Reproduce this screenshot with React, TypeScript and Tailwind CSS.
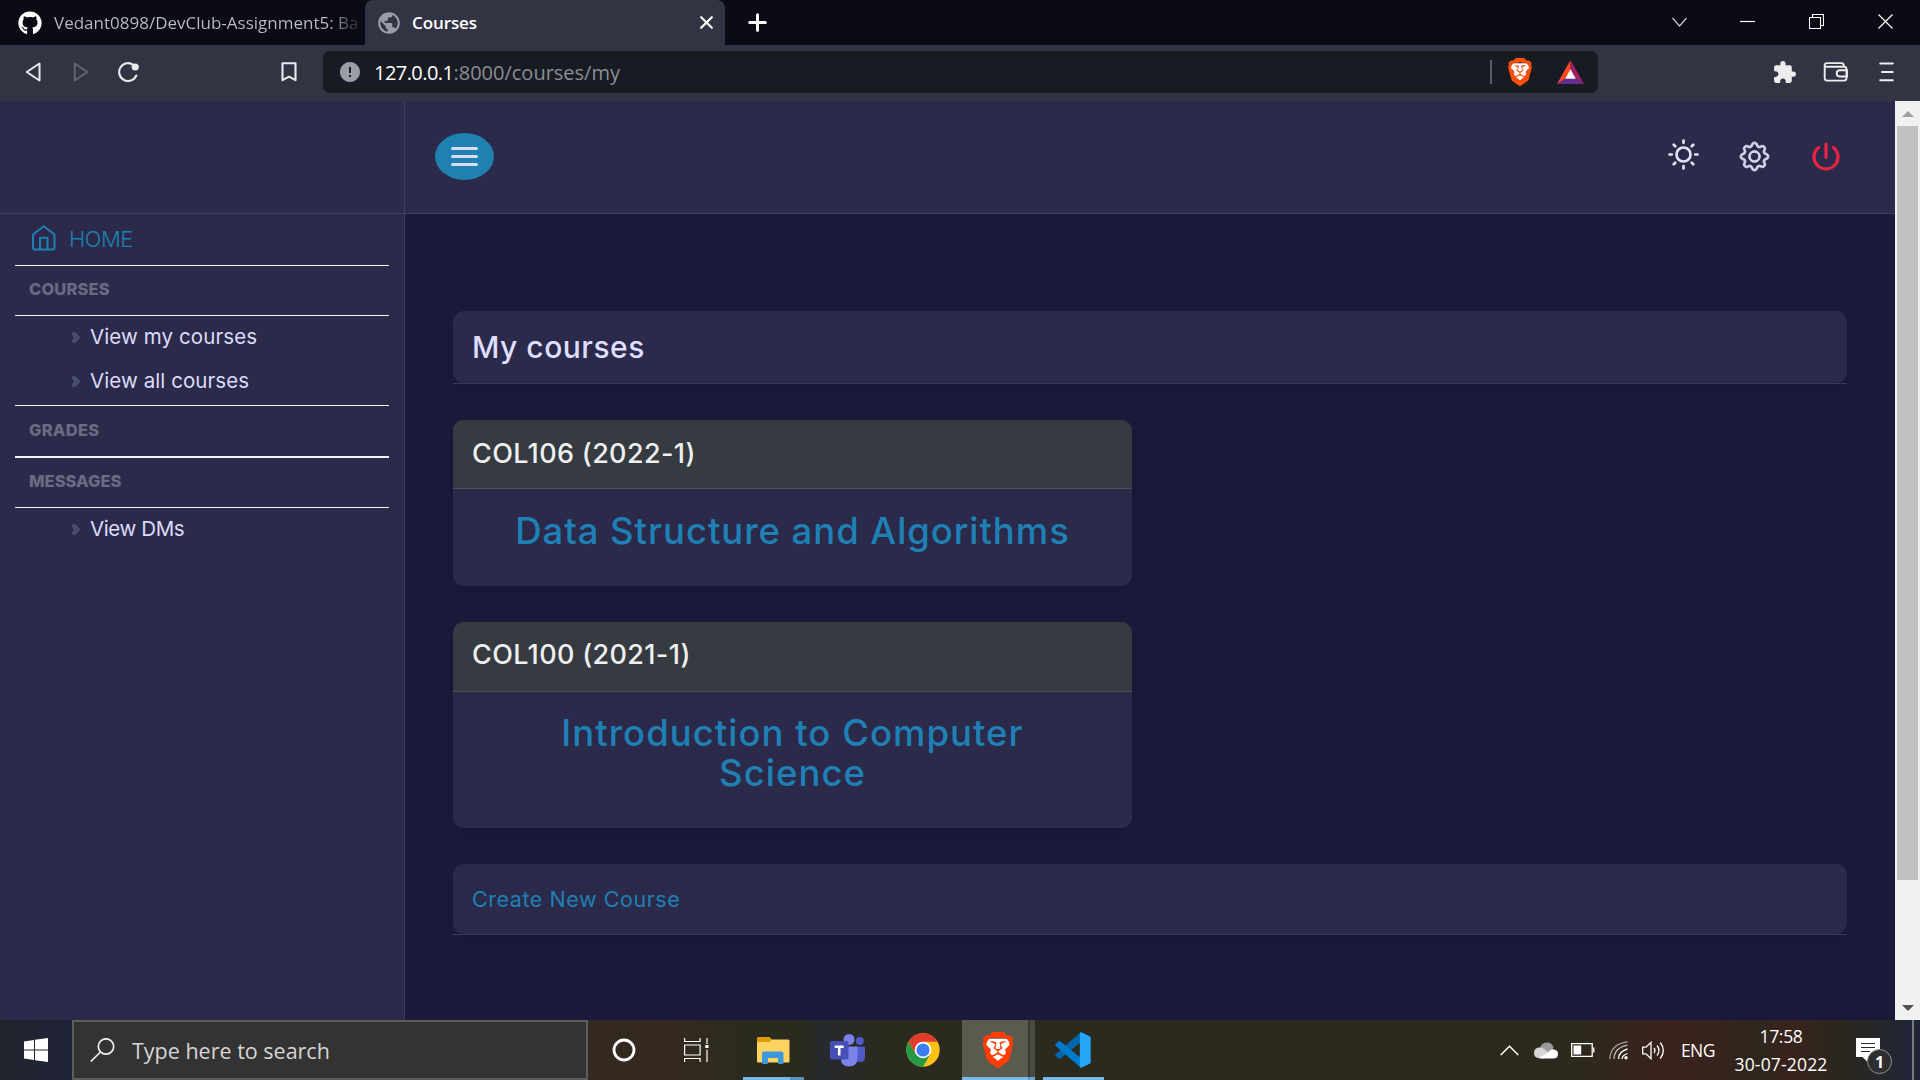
import React from "react";
import { BsGear } from "react-icons/bs";
import { SiBrave } from "react-icons/si";
import { FaGithub } from "react-icons/fa";
import { MdPublic, MdExtension, MdError } from "react-icons/md";

const ui = "font-['Open_Sans','Noto_Sans',sans-serif]";

function TabStrip() {
  return (
    <div className="flex h-[45px] items-stretch bg-[#0a0b14] text-white">
      <div className="flex w-[365px] items-center overflow-hidden pl-[18px]">
        <FaGithub className="size-6 shrink-0" />
        <div className="ml-3 w-[305px] overflow-hidden whitespace-nowrap bg-linear-to-r from-[#bcbec4] from-90% to-[#24252d] bg-clip-text text-[17px] text-transparent">
          Vedant0898/DevClub-Assignment5: Ba
        </div>
      </div>
      <div className="flex w-[360px] items-center rounded-t-lg bg-[#323443] pl-[11px] pr-[12px]">
        <MdPublic className="size-[26px] text-[#9a9da6]" />
        <div className="ml-[10px] text-[17px] font-semibold tracking-[-0.1px]">Courses</div>
        <svg className="ml-auto size-[13px]" viewBox="0 0 13 13" stroke="currentColor" strokeWidth="2.2" strokeLinecap="round">
          <path d="M1.2 1.2l10.6 10.6M11.8 1.2L1.2 11.8" />
        </svg>
      </div>
      <svg className="ml-[23px] mt-[13px] size-[19px]" viewBox="0 0 19 19" stroke="currentColor" strokeWidth="3" strokeLinecap="round">
        <path d="M9.5 1.7v15.6M1.7 9.5h15.6" />
      </svg>
      <div className="ml-auto flex w-[248px] items-center pb-[2px]">
        <svg width="15" height="10" viewBox="0 0 15 10" fill="none" stroke="#c9c9cd" strokeWidth="1.2"><path d="M.5 1l7 8 7-8" /></svg>
        <svg className="ml-[53px]" width="15" height="15" fill="none" stroke="#fff" strokeWidth="1.2"><path d="M0 7.5h15" /></svg>
        <svg className="ml-[54px]" width="15" height="15" fill="none" stroke="#fff" strokeWidth="1.1"><path d="M.5 3.5h11v11H.5zM3.5 3.5v-3h11v11h-3" /></svg>
        <svg className="ml-[54px]" width="15" height="15" fill="none" stroke="#fff" strokeWidth="1.2"><path d="M.5.5l14 14M14.5.5l-14 14" /></svg>
      </div>
    </div>
  );
}

function Toolbar() {
  return (
    <div className="flex h-14 items-start bg-[#323443] pt-[6px]">
      <div className="flex h-[42px] w-[323px] items-center">
        <svg className="ml-[25px]" width="16" height="20" viewBox="0 0 16 20" fill="none" stroke="#eaeaec" strokeWidth="2" strokeLinejoin="round"><path d="M14.5 1.5v17L1.7 10z" /></svg>
        <svg className="ml-[32px]" width="16" height="20" viewBox="0 0 16 20" fill="none" stroke="#62646f" strokeWidth="2" strokeLinejoin="round"><path d="M1.7 1.5v17L14.5 10z" /></svg>
        <svg className="ml-[29px]" width="22" height="20" viewBox="0 0 22 20" fill="none" stroke="#eaeaec" strokeWidth="2.1" strokeLinecap="round">
          <path d="M15.5 3A8.900 8.900 0 1 0 18.300 13.500" />
          <circle cx="17.200" cy="5" r="3.600" fill="#eaeaec" stroke="none" />
        </svg>
        <svg className="ml-[141px]" width="16" height="20" viewBox="0 0 16 20" fill="none" stroke="#eaeaec" strokeWidth="2.1" strokeLinejoin="round"><path d="M1.5 1.200h13v17L8 14.600 1.500 18.200z" /></svg>
      </div>
      <div className="flex h-[42px] w-[1275px] items-center rounded-[7px] bg-[#181b22] pl-[15px] pr-[14px]">
        <MdError className="size-6 text-[#9b9ea7]" />
        <div className="ml-3 mt-[2px] flex text-[20px]">
          <span className="tracking-[-0.55px] text-white">127.0.0.1</span>
          <span className="text-[#8b8e95]">:8000/courses/my</span>
        </div>
        <div className="ml-auto h-6 w-[2px] bg-[#5b5d63]" />
        <div className="ml-[14px] grid h-[29px] w-[26px] place-items-center">
          <BraveLogo className="size-[28px]" small />
        </div>
        <svg className="ml-[25px]" width="27" height="24" viewBox="0 0 27 24">
          <path d="M13.500 0L0 24l8.500-5.200 5-9z" fill="#ff4724" />
          <path d="M13.500 0L27 24l-8.500-5.200-5-9z" fill="#9e1f63" />
          <path d="M0 24h27l-8.500-5.500h-10z" fill="#662d91" />
          <path d="M13.500 9.300l5.300 9.500H8.200z" fill="#fff" />
        </svg>
      </div>
      <div className="flex h-[42px] flex-1 items-center text-[#ededee]">
        <MdExtension className="ml-[174px] size-[25px]" />
        <svg className="ml-[26px]" width="25" height="20" viewBox="0 0 25 20" fill="none" stroke="currentColor" strokeWidth="1.900" strokeLinejoin="round">
          <path d="M1.700 3.200v12.800q0 2.600 2.600 2.600h16.600q2.600 0 2.600-2.600V7q0-2.200-2.600-2.300H3.500q-1.800 0-1.800-1.700 0-1.900 2-1.900h15q2 0 2.300 3.300" />
          <path d="M24 8.300h-7q-3.300 0-3.300 3.100t3.300 3.100h7z" />
        </svg>
        <svg className="ml-[31px]" width="15" height="20" viewBox="0 0 15 20" stroke="currentColor" strokeWidth="2" strokeLinecap="round"><path d="M1.200 1.500h12.600M3 10h10.800M1.200 18.200h12.600" /></svg>
      </div>
    </div>
  );
}

function BraveLogo({ className, small }: { className: string; small?: boolean }) {
  return (
    <svg className={className} viewBox="0 0 24 24">
      <path d="M5 4.500h14l1 5-4 9-4 3.500-4-3.500-4-9z" fill="#fff" />
      <SiBrave size={24} color={small ? "#fb4f0b" : "#ff3d05"} />
    </svg>
  );
}

function NavHeading({ label, className }: { label: string; className: string }) {
  return (
    <div className={`flex items-center border-[#f4f4f8] pl-[14px] pb-[2px] text-[16.500px] font-extrabold text-[#6a6a82] ${className}`}>{label}</div>
  );
}

function NavLink({ label, className }: { label: string; className: string }) {
  return (
    <div className={`flex items-center pl-[57px] pb-[2px] text-[20.500px] text-[#dddcfa] ${className}`}>
      <svg width="8" height="11" viewBox="0 0 8 11" fill="#3f4468" stroke="#55587a" strokeWidth="1.200" strokeLinejoin="round">
        <path d="M.8 1h2.400L7.200 5.500 3.200 10H.8l.2-1.800 2.200-2.700L1 2.800z" />
      </svg>
      <span className="ml-[10px]">{label}</span>
    </div>
  );
}

function Sidebar() {
  return (
    <div className="w-[405px] shrink-0 border-r border-[#403e5f] bg-[#2b2a4a]">
      <div className="h-[113px] border-b border-[#403e5f]" />
      <div className="ml-[15px] w-[374px]">
        <div className="flex h-[52px] items-center border-b border-[#f4f4f8] pl-[17px] text-[22px] text-[#1f80b5]">
          <svg className="mb-[3px]" width="24" height="26" viewBox="0 0 24 26" fill="none" stroke="currentColor" strokeWidth="2" strokeLinejoin="round">
            <path d="M1 9.500L11.700 1.200 22.500 9.500v13q0 2-2 2H3q-2 0-2-2z" />
            <path d="M8 24.500V12.800h7.500v11.700" />
          </svg>
          <span className="ml-[13px] font-light tracking-[-0.5px]">HOME</span>
        </div>
        <NavHeading label="COURSES" className="h-[50px] border-b tracking-[0.15px]" />
        <NavLink label="View my courses" className="h-11 tracking-[0.1px]" />
        <NavLink label="View all courses" className="h-[45px] tracking-[0.08px]" />
        <NavHeading label="GRADES" className="h-[53px] border-t border-b-2 tracking-[0.25px]" />
        <NavHeading label="MESSAGES" className="h-[50px] border-b tracking-[0px]" />
        <NavLink label="View DMs" className="h-11 tracking-[-0.4px]" />
      </div>
    </div>
  );
}

function Header() {
  return (
    <div className="flex h-[113px] items-center border-b border-[#403e5f] bg-[#2b2a4a] pb-[2px] pl-[30px] pr-[54px]">
      <div className="flex h-[47px] w-[59px] flex-col items-center justify-center gap-[5px] rounded-[50%] bg-[#1f80b2]">
        <div className="h-[3px] w-[27px] rounded-full bg-[#dcdcf5]" />
        <div className="h-[3px] w-[27px] rounded-full bg-[#dcdcf5]" />
        <div className="h-[3px] w-[27px] rounded-full bg-[#dcdcf5]" />
      </div>
      <svg className="mb-[4px] ml-auto" width="31" height="31" viewBox="-15.5 -15.5 31 31" fill="none" stroke="#e2e2f8" strokeWidth="2.700" strokeLinecap="round">
        <circle r="7" />
        <path d="M0-14v2.300M0 14v-2.300M-14 0h2.300M14 0h-2.300M-9.800-9.800l1.600 1.600M9.800 9.800l-1.600-1.600M-9.800 9.800l1.600-1.600M9.800-9.800l-1.600 1.600" />
      </svg>
      <BsGear className="ml-[41px] size-[29px] overflow-visible text-[#d6d6ee]" strokeWidth="0.500" stroke="#d6d6ee" />
      <svg className="ml-[43px] mr-px" width="28" height="29" viewBox="0 0 28 29" fill="none" stroke="#ea2340" strokeWidth="3.200" strokeLinecap="round">
        <path d="M14 2v13.500M6.600 5.400a12 12 0 1 0 14.800 0" />
      </svg>
    </div>
  );
}

function CourseCard({ code, title, headClass, bodyClass }: { code: string; title: string; headClass: string; bodyClass: string }) {
  return (
    <div className="mt-9 w-[679px] overflow-hidden rounded-[11px] bg-[#2b2a4a] shadow-[0_6px_20px_rgba(10,8,48,0.15)]">
      <div className={`flex items-center border-b border-[#4e5154] bg-[#363a41] pl-[19px] text-[27px] font-medium tracking-[0.35px] text-[#efefef] ${headClass}`}>{code}</div>
      <div className={`px-[60px] text-center text-[36.500px] font-medium leading-10 text-[#1f80b5] ${bodyClass}`}>{title}</div>
    </div>
  );
}

function Main() {
  return (
    <div className="flex-1 bg-[#1b1a3b]">
      <Header />
      <div className="px-12 pt-[97px]">
        <div className="border-b border-[#403e5f]">
          <div className="flex h-[72px] items-center rounded-[11px] bg-[#2b2a4a] pl-[19px] text-[30px] font-medium tracking-[0.500px] text-[#dfdeff] shadow-[0_6px_20px_rgba(10,8,48,0.15)]">My courses</div>
        </div>
        <CourseCard code="COL106 (2022-1)" title="Data Structure and Algorithms" headClass="h-[69px]" bodyClass="h-[97px] pt-[22px] tracking-[0.940px] whitespace-nowrap" />
        <CourseCard code="COL100 (2021-1)" title="Introduction to Computer Science" headClass="h-[70px] pb-[2px]" bodyClass="h-[136px] pt-[21px] tracking-[1.020px]" />
        <div className="mt-9 border-b border-[#403e5f]">
          <div className="flex h-[70px] items-center rounded-[11px] bg-[#2b2a4a] pl-[19px] text-[21.500px] tracking-[0.550px] text-[#1f80b5] shadow-[0_6px_20px_rgba(10,8,48,0.15)]">Create New Course</div>
        </div>
      </div>
    </div>
  );
}

function Scrollbar() {
  return (
    <div className="flex w-[25px] shrink-0 flex-col items-center bg-[#f1f1f1]">
      <svg className="mt-[10px]" width="12" height="6" viewBox="0 0 12 6" fill="#a0a0a0"><path d="M6 0l6 6H0z" /></svg>
      <div className="mt-[9px] h-[754px] w-[21px] bg-[#c1c1c1]" />
      <svg className="mb-[9px] mt-auto" width="12" height="6" viewBox="0 0 12 6" fill="#505050"><path d="M6 6L0 0h12z" /></svg>
    </div>
  );
}

function Explorer() {
  return (
    <svg width="33" height="27" viewBox="0 0 33 27">
      <path d="M0 1q0-1 1-1h11.500l2.500 2.500L12.500 6H0z" fill="#dd9b05" />
      <path d="M0 5h12l3-2.500h16q1.500 0 1.500 1.500v20.500q0 1-1 1H1q-1 0-1-1z" fill="#fdd462" />
      <path d="M5 26V16.500q0-2 2-2h17.500q2 0 2 2V26q0 1-1 1H22q-1 0-1-1v-5H11v5q0 1-1 1H6q-1 0-1-1z" fill="#3d97dc" />
    </svg>
  );
}

function Teams() {
  return (
    <svg width="36" height="33" viewBox="0 0 36 33">
      <circle cx="29.800" cy="7" r="4" fill="#5059c9" />
      <path d="M25 12.500h9q1 0 1 1V23q0 5-5 5t-5-4z" fill="#5059c9" />
      <circle cx="19" cy="5.500" r="5.500" fill="#7b83eb" />
      <path d="M11 12.500h15.500q1 0 1 1V24q0 8.500-8.500 8.500T11 24z" fill="#7b83eb" />
      <rect y="7" width="18.500" height="18.500" rx="1.800" fill="#464eb8" />
      <path d="M4.700 11.500h9V14h-3.200v7.500H7.900V14H4.700z" fill="#fff" />
    </svg>
  );
}

function Chrome() {
  return (
    <svg width="34" height="34" viewBox="-17 -17 34 34">
      <circle r="16.700" fill="#fbc116" />
      <path d="M-14.500-8.300A16.700 16.700 0 0 1 14.500-8.300H0L-7.200 4.200z" fill="#e33b2e" />
      <path d="M-14.500-8.300A16.700 16.700 0 0 0 0 16.700L7.200 4.200-7.200 4.200z" fill="#269847" />
      <circle r="8.300" fill="#fff" />
      <circle r="6.600" fill="#3c7df0" />
    </svg>
  );
}

function VsCode() {
  return (
    <svg width="36" height="36" viewBox="0 0 36 36">
      <path d="M26 0l0 10L5.500 26.500q-1 .8-2 0L.7 24q-1-1 0-2z" fill="#0065a9" />
      <path d="M26 36l0-10L5.500 9.500q-1-.8-2 0L.7 12q-1 1 0 2z" fill="#007acc" />
      <path d="M26 36l9-4.500q.7-.4.700-1.200V5.700q0-.8-.7-1.200L26 0q-1.200.8-1.200 2.500v31Q24.800 35.200 26 36z" fill="#24a5f5" />
    </svg>
  );
}

function Taskbar() {
  return (
    <div className={`flex h-[60px] items-stretch bg-[linear-gradient(90deg,#1f242c_0px,#202438_72px,#33291e_595px,#35291f_670px,#2b2a1e_745px,#2a2a1f_800px,#272a2d_822px,#2b2a1e_880px,#2b2a1d_1500px,#2e291d_1580px,#3a221d_1665px,#35231c_1720px,#2e261d_1760px,#38231c_1785px,#2b271e_1840px,#242730_1890px,#202438_1920px)] text-white ${ui}`}>
      <div className="flex w-[72px] items-center justify-center">
        <svg width="24" height="24" viewBox="0 0 24 24" fill="#fff"><path d="M0 3.400l10-1.400v9.500H0zM11 1.800L24 0v11.500H11zM0 12.500h10V22L0 20.600zM11 12.500h13V24l-13-1.800z" /></svg>
      </div>
      <div className="flex w-[516px] items-center border-2 border-[#5d5d5d] bg-[#333] pl-4">
        <svg width="25" height="24" viewBox="0 0 25 24" fill="none" stroke="#eee" strokeWidth="1.700"><circle cx="16" cy="8.500" r="7.700" /><path d="M10.500 14L.7 23.500" /></svg>
        <span className="ml-[17px] mt-[3px] text-[21.500px] text-[#d6d6d6]">Type here to search</span>
      </div>
      <div className="grid w-[72px] place-items-center">
        <svg width="24" height="24" viewBox="0 0 24 24" fill="none" stroke="#fff" strokeWidth="2.800"><circle cx="12" cy="12" r="10" /></svg>
      </div>
      <div className="grid w-[72px] place-items-center">
        <svg width="25" height="24" viewBox="0 0 25 24" fill="none" stroke="#fff" strokeWidth="1.200">
          <path d="M.6 0v3.500h15.500V0M.6 24v-3.500h15.500V24M.6 7h15.500v10H.6zM23 0v6M23 11.500V24" />
          <path d="M21.300 7h3.200v3h-3.200z" fill="#fff" stroke="none" />
        </svg>
      </div>
      <div className="ml-[3px] flex w-[75px] flex-col items-center justify-between pl-[1px] pt-[17px]">
        <Explorer />
        <div className="flex h-[3px] w-[61px] bg-[#5a92bf]"><div className="w-[47px] bg-[#76b9ed]" /></div>
      </div>
      <div className="flex w-[75px] justify-center pt-[14px]"><Teams /></div>
      <div className="flex w-[77px] justify-center pr-[2px] pt-[13px]"><Chrome /></div>
      <div className="flex h-[60px] w-[73px]">
        <div className="flex w-[66px] flex-col items-center justify-between border-b-[3px] border-[#76b9ed] bg-[#5b5a4f] pl-[6px] pt-[12px]"><BraveLogo className="size-[36px]" /></div>
        <div className="w-[2px] border-b-[3px] border-[#5a92bf] bg-[#3a3a30]" />
        <div className="w-[5px] border-b-[3px] border-[#6aa6d5] bg-[#4a4a40]" />
      </div>
      <div className="flex w-[77px] flex-col items-center justify-between pt-[12px]">
        <div className="pr-[1px]"><VsCode /></div>
        <div className="h-[3px] w-[61px] bg-[#76b9ed]" />
      </div>
      <div className="ml-[388px] flex items-center">
        <svg width="19" height="11" viewBox="0 0 19 11" fill="none" stroke="#fff" strokeWidth="1.500"><path d="M.7 10l8.800-8.800L18.300 10" /></svg>
        <svg className="ml-[15px]" width="24" height="17" viewBox="0 0 24 17">
          <path d="M6 8q0-7.500 7-7.500 5.500 0 6.500 5.500L14 12H7z" fill="#9a9a98" />
          <path d="M5 16q-5 0-5-5t5-5.500q3-.5 6 2L16 12l-6 4.500z" fill="#d6d6d4" />
          <path d="M5 16l9-5.500Q17 6 20 7.500q4 .5 4 4.500t-4 4.500H6z" fill="#fff" />
        </svg>
        <svg className="ml-[13px]" width="24" height="14" viewBox="0 0 24 14" fill="none" stroke="#fff" strokeWidth="1.300"><path d="M.7.7h20.500v12.600H.7zM22.800 4.500v5" /><path d="M2.500 2.500h7.700v9H2.500z" fill="#fff" stroke="none" /></svg>
        <svg className="ml-[14px]" width="20" height="19" viewBox="0 0 20 19" fill="none" stroke="#fff" strokeWidth="1.300">
          <path d="M13 18q0-3.500 5.500-5.500" /><path d="M9.500 18q0-7.500 9-10" /><path d="M5 18Q5 7 18.500 4.200" stroke="#bdbab6" /><path d="M.8 18Q1.500 3 18.500.8" stroke="#a5a29e" />
          <circle cx="17" cy="16.800" r="1.700" fill="#fff" stroke="none" />
        </svg>
        <svg className="ml-[13px]" width="23" height="19" viewBox="0 0 23 19" fill="none" stroke="#fff" strokeWidth="1.300">
          <path d="M.7 6.200H4L9 1.300v16.400l-5-4.900H.7z" /><path d="M12 7q2 2.500 0 5M15 4.500q4 5 0 10" /><path d="M18.300 1.500q6 8 0 16" />
        </svg>
        <span className="ml-[16px] w-[53px] whitespace-nowrap text-[17.500px] tracking-[-0.600px]">ENG</span>
      </div>
      <div className="flex w-[94px] flex-col items-center pt-[2px] text-[17.500px] leading-7">
        <div className="tracking-[-0.300px]">17:58</div>
        <div className="whitespace-nowrap tracking-[0.170px]">30-07-2022</div>
      </div>
      <div className="relative ml-[28px] mt-[18px] h-[24px] w-[24px]">
        <svg width="24" height="24" viewBox="0 0 24 24"><path d="M0 0h24v19H13l-2 4.500L6.500 19H0z" fill="#fff" /><path d="M5 5.500h14M5 9.500h14M5 13.500h9" stroke="#2a2823" strokeWidth="1.200" /></svg>
        <div className="absolute left-[11px] top-[11px] grid size-[25px] place-items-center rounded-full border border-[#8f8f8f] bg-[#2d2e30] text-[16px] font-bold leading-none">1</div>
      </div>
      <div className="ml-auto mr-[6px] w-[2px] bg-[#77787c]" />
    </div>
  );
}

export default function App() {
  return (
    <div className="flex h-[1080px] w-[1920px] flex-col overflow-hidden">
      <div className={ui}>
        <TabStrip />
        <Toolbar />
      </div>
      <div className="flex h-[919px] font-['Inter',sans-serif]">
        <Sidebar />
        <Main />
        <Scrollbar />
      </div>
      <Taskbar />
    </div>
  );
}
